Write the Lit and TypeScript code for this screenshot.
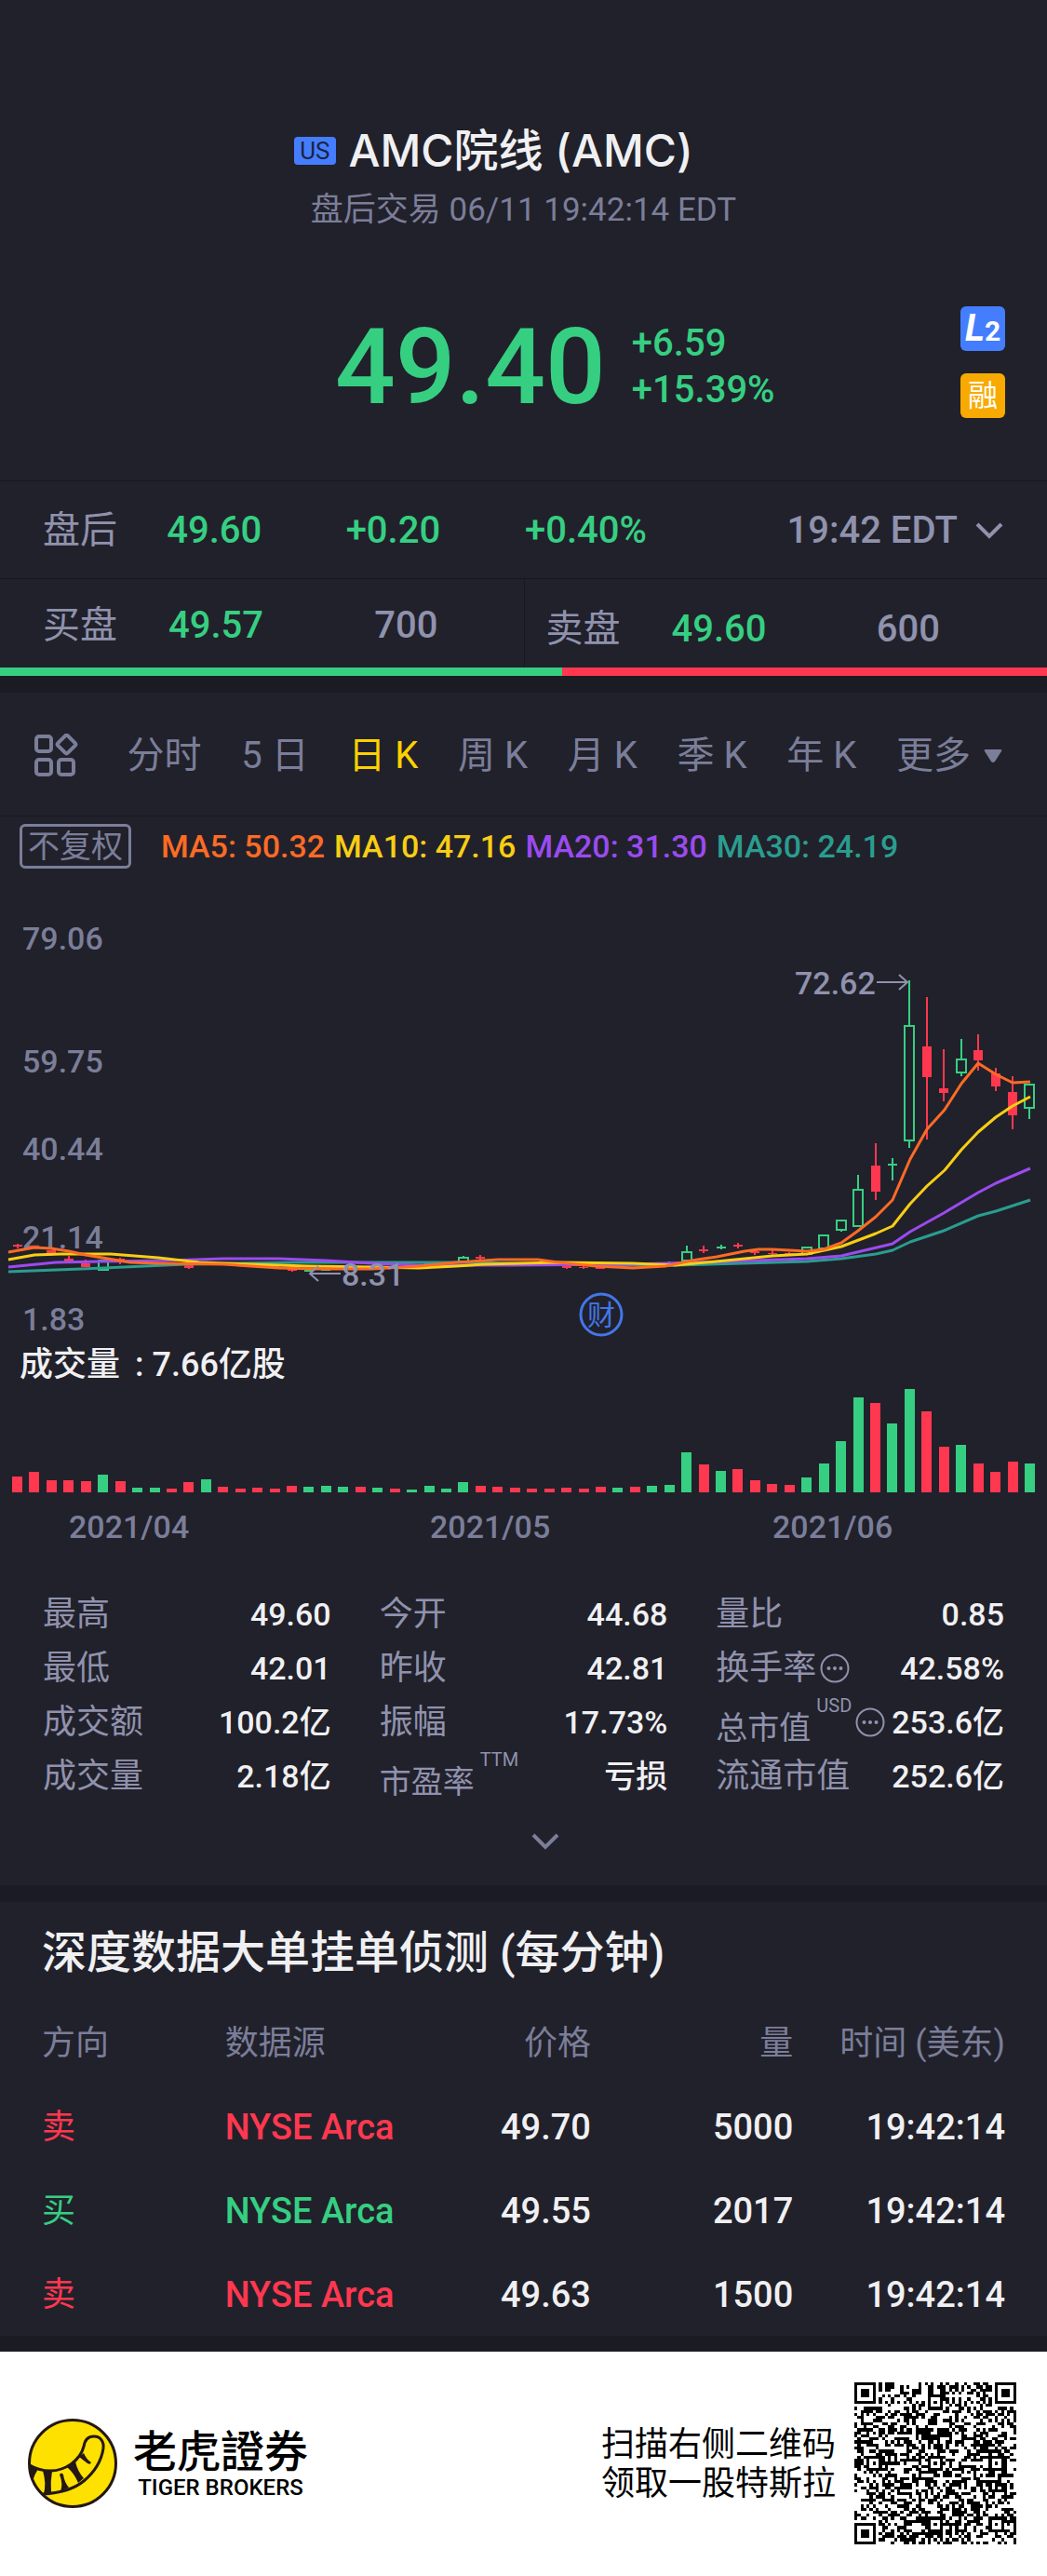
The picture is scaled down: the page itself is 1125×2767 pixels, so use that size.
import { LitElement, html, css, svg } from "lit";
import { customElement, state } from "lit/decorators.js";

type Side = "up" | "down";

/** [slot, side, bodyTop, bodyBottom, high, low] in plot units. */
type Candle = [number, Side, number, number, number, number];

const SLOT = 18.44;
const FIRST = 18.5;
const slotX = (i: number) => FIRST + i * SLOT;

const CANDLES: Candle[] = [
  [0, "down", 387, 389, 386, 391],
  [1, "down", 388, 390, 388, 391],
  [2, "down", 393, 397, 393, 399],
  [3, "down", 402, 405, 399, 406],
  [4, "down", 407, 411, 403, 411],
  [5, "up", 404, 414, 404, 414],
  [6, "down", 402, 404, 401, 408],
  [10, "down", 409, 412, 409, 413],
  [11, "up", 406, 408, 405, 409],
  [14, "down", 409, 410, 408, 411],
  [15, "down", 409, 411, 408, 412],
  [16, "down", 411, 415, 410, 416],
  [17, "up", 413, 416, 413, 416],
  [18, "up", 413, 415, 412, 415],
  [24, "up", 406, 408, 406, 408],
  [25, "up", 405, 408, 405, 408],
  [26, "up", 401, 405, 399, 405],
  [27, "down", 400, 402, 398, 403],
  [28, "down", 403, 404, 402, 404],
  [32, "down", 410, 412, 410, 413],
  [33, "down", 411, 412, 410, 413],
  [34, "down", 411, 413, 410, 413],
  [37, "up", 407, 408, 406, 409],
  [38, "up", 406, 408, 405, 409],
  [39, "up", 395, 404, 388, 404],
  [40, "down", 392, 394, 388, 396],
  [41, "up", 389, 391, 387, 392],
  [42, "down", 387, 389, 385, 391],
  [43, "down", 394, 396, 394, 398],
  [44, "down", 396, 397, 393, 398],
  [45, "down", 396, 398, 395, 399],
  [46, "up", 390, 397, 389, 397],
  [47, "up", 377, 391, 377, 391],
  [48, "up", 361, 371, 360, 373],
  [49, "up", 328, 367, 312, 368],
  [50, "down", 302, 330, 278, 339],
  [51, "up", 300, 302, 294, 318],
  [52, "up", 152, 275, 103, 283],
  [53, "down", 174, 207, 121, 274],
  [54, "down", 219, 224, 177, 233],
  [55, "up", 188, 202, 166, 206],
  [56, "down", 178, 189, 161, 200],
  [57, "down", 203, 217, 197, 222],
  [58, "down", 223, 248, 206, 263],
  [59, "up", 215, 240, 215, 252],
];

const AVERAGES = [
  {
    name: "ma30",
    label: "MA30: 24.19",
    points:
      "9,416 100,412.5 200,408 320,406 500,406 620,408 680,409 725,409 780,407.5 867,405 904,402 941,397 959,393 978,384 1014,372 1051,356 1070,351 1107,339",
  },
  {
    name: "ma20",
    label: "MA20: 31.30",
    points:
      "9,411 60,406 110,405 180,404 240,402 300,402 350,404 400,407 450,409 550,409 680,408 780,405 867,402 904,399 959,386 978,373 1014,353 1051,331 1070,321 1107,305",
  },
  {
    name: "ma10",
    label: "MA10: 47.16",
    points:
      "9,403 37,398 65,397 119,397 170,401 214,406 270,408 330,410 400,411 450,412 490,410 520,408 600,406 680,407 725,409 780,404 830,399 867,397 904,389 941,375 959,367 978,343 996,324 1015,307 1033,285 1051,266 1070,250 1088,238 1107,228",
  },
  {
    name: "ma5",
    label: "MA5: 50.32",
    points:
      "9,395 37,390 55,391 74,394 92,398 110,401 140,406 170,407 240,408 300,412 340,413 400,413 450,410 490,406 535,403 578,403 600,406 640,410 680,412 715,410 743,404 770,400 800,394 815,392 830,392 867,394 885,392 904,385 922,372 941,357 959,339 978,295 996,263 1015,242 1033,214 1051,192 1070,204 1088,213 1107,212",
  },
];

const PRICE_SCALE: [string, number][] = [
  ["79.06", 70],
  ["59.75", 202],
  ["40.44", 296],
  ["21.14", 391],
  ["1.83", 479],
];

/** Bar heights; a leading minus marks a falling day. */
const VOLUMES = [
  -17, -22, -13, -13, -12, 19, -12, 5, 5, -4, -11, 14, -6, -4, -5, -4, -7, 6, 7, 6,
  -6, 5, -4, 3, 7, 4, 11, -7, -6, -5, -4, -4, -5, -4, -6, 5, -6, 7, 8, 43,
  -30, 23, -25, -13, -9, -8, 16, 31, 55, 102, -96, 74, 111, -87, -49, 51, -31, -22, -33, 31,
];

const MONTHS: [string, number][] = [
  ["2021/04", 74],
  ["2021/05", 462],
  ["2021/06", 830],
];

const TABS: [string, string][] = [
  ["分时", ""],
  ["5", "日"],
  ["日", "K"],
  ["周", "K"],
  ["月", "K"],
  ["季", "K"],
  ["年", "K"],
];

interface Stat {
  label: string;
  value: string;
  sup?: string;
  info?: boolean;
}

const STATS: Stat[] = [
  { label: "最高", value: "49.60" },
  { label: "今开", value: "44.68" },
  { label: "量比", value: "0.85" },
  { label: "最低", value: "42.01" },
  { label: "昨收", value: "42.81" },
  { label: "换手率", value: "42.58%", info: true },
  { label: "成交额", value: "100.2亿" },
  { label: "振幅", value: "17.73%" },
  { label: "总市值", value: "253.6亿", sup: "USD", info: true },
  { label: "成交量", value: "2.18亿" },
  { label: "市盈率", value: "亏损", sup: "TTM" },
  { label: "流通市值", value: "252.6亿" },
];

const ORDERS: [Side, string, string, string, string][] = [
  ["down", "NYSE Arca", "49.70", "5000", "19:42:14"],
  ["up", "NYSE Arca", "49.55", "2017", "19:42:14"],
  ["down", "NYSE Arca", "49.63", "1500", "19:42:14"],
];

const QR_SIZE = 53;

/** Dark modules of the code: finders, timing, alignment, then the data area. */
function qrPath(): string {
  const n = QR_SIZE;
  const grid: (boolean | null)[][] = Array.from({ length: n }, () => Array(n).fill(null));
  const square = (cx: number, cy: number, r: number, dark: (d: number) => boolean) => {
    for (let y = -r; y <= r; y++)
      for (let x = -r; x <= r; x++) {
        const row = grid[cy + y];
        if (row && cx + x >= 0 && cx + x < n) row[cx + x] = dark(Math.max(Math.abs(x), Math.abs(y)));
      }
  };
  for (const x of [6, 26, 46])
    for (const y of [6, 26, 46]) {
      if ((x === 6 && y !== 26) || (y === 6 && x === 46)) continue;
      square(x, y, 2, (d) => d !== 1);
    }
  for (const [x, y] of [[3, 3], [n - 4, 3], [3, n - 4]]) square(x, y, 4, (d) => d !== 2 && d !== 4);
  let seed = 20210611;
  let d = "";
  for (let y = 0; y < n; y++)
    for (let x = 0; x < n; x++) {
      seed = (Math.imul(seed, 1664525) + 1013904223) >>> 0;
      let dark = grid[y][x];
      if (dark === null) dark = x === 6 || y === 6 ? (x + y) % 2 === 0 : seed / 4294967296 < 0.5;
      if (dark) d += `M${x} ${y}h1v1h-1z`;
    }
  return d;
}

const chevron = html`<svg class="chevron" viewBox="0 0 32 20" aria-hidden="true">
  <path d="M3 3 16 16 29 3" fill="none" stroke="currentColor" stroke-width="4" />
</svg>`;

@customElement("app-root")
export class AppRoot extends LitElement {
  static styles = css`
    :host {
      display: block;
      background: #21212b;
      color: #f0f0f2;
      font-family: Roboto, "Noto Sans CJK SC", sans-serif;
      font-size: 34px;
      line-height: 48px;
      --up: #36cf82;
      --down: #ff3850;
      --muted: #7b7e99;
      --soft: #9092ad;
      --rule: #17171f;
      --band: #1b1b24;
      --blue: #447eff;
    }
    * { box-sizing: border-box; }
    h1, h2, p, dl, dd { margin: 0; }
    button {
      font: inherit;
      color: inherit;
      background: none;
      border: 0;
      padding: 0;
      white-space: nowrap;
      cursor: pointer;
    }
    svg { display: block; }
    .up { color: var(--up); }
    .down { color: var(--down); }
    .num { font-weight: 500; }

    .head {
      padding: 134px 0 42px;
      border-bottom: 1px solid var(--rule);
    }
    .title {
      display: flex;
      justify-content: center;
      align-items: center;
      gap: 14px;
      padding-right: 64px;
    }
    .market {
      background: var(--blue);
      color: #1c2340;
      border-radius: 4px;
      padding: 0 6px;
      font-size: 26px;
      line-height: 30px;
    }
    .name {
      font: 500 48px/56px Inter, "Noto Sans CJK SC", sans-serif;
    }
    .session {
      margin-top: 12px;
      text-align: center;
      font-size: 35px;
      color: var(--muted);
    }
    .quote {
      display: flex;
      align-items: center;
      height: 160px;
      margin-top: 64px;
      padding: 0 45px 0 32%;
    }
    .price {
      font-size: 114px;
      line-height: 160px;
      font-weight: 500;
      color: var(--up);
    }
    .change {
      margin-left: 28px;
      font-size: 40px;
      line-height: 50px;
      font-weight: 500;
      color: var(--up);
    }
    .badges {
      display: grid;
      gap: 24px;
      margin-left: auto;
      align-self: flex-start;
      padding-top: 15px;
    }
    .badge {
      width: 48px;
      height: 48px;
      border-radius: 6px;
      color: #fff;
      font-size: 32px;
      line-height: 48px;
      text-align: center;
      background: #f9aa00;
    }
    .level {
      background: var(--blue);
      font-weight: 700;
      font-size: 30px;
    }
    .level em { font-size: 40px; }

    .after {
      display: grid;
      grid-template-columns: 133fr 192fr 192fr 248fr 266fr;
      align-items: center;
      height: 105px;
      padding: 2px 46px 0;
      border-bottom: 1px solid var(--rule);
      font-size: 40px;
      color: var(--soft);
    }
    .clock {
      display: flex;
      align-items: center;
      gap: 18px;
      justify-self: end;
    }
    .chevron { width: 32px; height: 20px; }
    .book {
      display: grid;
      grid-template-columns: 1fr 1fr;
      font-size: 40px;
      color: var(--soft);
    }
    .bid, .ask {
      display: flex;
      align-items: center;
      gap: 55px;
      height: 95px;
      padding: 4px 92px 0 46px;
    }
    .ask {
      padding: 12px 115px 0 23px;
      border-left: 1px solid var(--rule);
    }
    .qty { margin-left: auto; }
    .ratio {
      display: flex;
      height: 9px;
      background: var(--down);
    }
    .ratio-up { background: var(--up); }
    .band { height: 18px; background: var(--band); }

    .tabs {
      display: flex;
      align-items: center;
      justify-content: space-between;
      height: 133px;
      padding: 4px 48px 0 36px;
      border-bottom: 1px solid var(--rule);
      font-size: 40px;
      color: var(--muted);
    }
    .tab { display: flex; gap: 10px; }
    .tab.on { color: #fdd100; }
    .layout { margin-right: 10px; }
    .grid-icon { width: 48px; height: 48px; }
    .more { display: flex; align-items: center; gap: 14px; }
    .caret { width: 20px; height: 16px; }

    .legend {
      display: flex;
      align-items: center;
      gap: 10px;
      padding: 8px 21px 0;
      line-height: 42px;
      font-weight: 500;
    }
    .adjust {
      border: 3px solid var(--muted);
      border-radius: 6px;
      padding: 0 6px;
      margin-right: 22px;
      color: var(--muted);
      line-height: 42px;
      font-weight: 400;
    }
    .ma5 { color: #fd6b25; }
    .ma10 { color: #f8ce14; }
    .ma20 { color: #9b4bf0; }
    .ma30 { color: #2a9d8f; }
    .plot { width: 100%; height: auto; font-size: 34px; font-weight: 500; }
    .price-plot { margin-top: 17px; }
    .axis { fill: var(--muted); }
    .mark { fill: var(--soft); }
    .arrow { fill: none; stroke: var(--soft); stroke-width: 2; }
    .line { fill: none; stroke: currentColor; stroke-width: 3; stroke-linejoin: round; }
    .hollow { fill: #21212b; stroke: var(--up); stroke-width: 2; }
    .wick { stroke: currentColor; stroke-width: 2; }
    .report { fill: none; stroke: #4277e8; stroke-width: 3; }
    .report-text { fill: #4277e8; font-size: 30px; font-weight: 400; text-anchor: middle; }
    .bar { fill: currentColor; }
    .volume {
      display: flex;
      gap: 16px;
      padding: 4px 21px 0;
      font-size: 36px;
      line-height: 45px;
      font-weight: 500;
    }

    .stats {
      display: grid;
      grid-template-columns: repeat(3, 1fr);
      column-gap: 52px;
      padding: 41px 46px 0;
    }
    .stat {
      display: flex;
      align-items: center;
      height: 58px;
    }
    .stat dt {
      display: flex;
      align-items: center;
      font-size: 36px;
      color: var(--soft);
      white-space: nowrap;
    }
    .stat dd { margin-left: auto; white-space: nowrap; font-weight: 500; }
    .has-sup .term { font-size: 34px; padding-top: 12px; }
    .sup {
      align-self: flex-start;
      font-size: 20px;
      line-height: 24px;
      padding-left: 6px;
    }
    .info { margin-left: 4px; }
    .info-icon { width: 32px; height: 32px; }
    .expand {
      display: block;
      margin: 21px auto 27px;
      padding: 10px 0 10px 46px;
      color: var(--muted);
    }

    .depth { padding: 25px 45px 0; }
    .depth h2 {
      font-size: 48px;
      line-height: 60px;
      font-weight: 500;
    }
    table {
      width: 100%;
      margin-top: 22px;
      border-collapse: collapse;
      table-layout: fixed;
      font-size: 38px;
    }
    th, td {
      height: 90px;
      padding: 0;
      text-align: right;
      font-weight: 400;
      white-space: nowrap;
    }
    td { font-weight: 500; }
    th { color: var(--muted); font-size: 36px; }
    .left { text-align: left; }
    .side { font-size: 36px; font-weight: 400; }
    .c1 { width: 19%; }
    .c2 { width: 23%; }
    .c3 { width: 15%; }
    .c4 { width: 21%; }
    .c5 { width: 22%; }
    .last { height: 17px; margin-top: -1px; }

    .foot {
      display: flex;
      align-items: center;
      min-height: 240px;
      padding: 0 33px 0 30px;
      background: #fff;
      color: #000;
    }
    .logo { width: 96px; height: 96px; }
    .brand { margin-left: 17px; text-align: center; }
    .brand-cn {
      font: 500 47px/48px "Noto Sans CJK TC", sans-serif;
    }
    .brand-en {
      margin-top: 4px;
      font-size: 24px;
      line-height: 28px;
      font-weight: 500;
    }
    .invite {
      margin-left: auto;
      padding-top: 2px;
      font-size: 36px;
      line-height: 42px;
    }
    .qr { width: 174px; height: 174px; margin-left: 20px; }
  `;

  @state() private tab = 2;

  private candle([i, side, top, bottom, high, low]: Candle) {
    const x = Math.round(slotX(i));
    return svg`<g class=${side}>
      <line class="wick" x1=${x} x2=${x} y1=${high} y2=${low}></line>
      ${side === "up" && bottom - top > 3
        ? svg`<rect class="hollow" x=${x - 5} y=${top} width="10" height=${bottom - top}></rect>`
        : svg`<rect class="bar" x=${x - 5} y=${top} width="10" height=${bottom - top}></rect>`}
    </g>`;
  }

  private renderHead() {
    return html`
      <header class="head">
        <div class="title">
          <span class="market">US</span>
          <h1 class="name">AMC院线 (AMC)</h1>
        </div>
        <p class="session">盘后交易 06/11 19:42:14 EDT</p>
        <div class="quote">
          <div class="price">49.40</div>
          <div class="change">
            <div>+6.59</div>
            <div>+15.39%</div>
          </div>
          <div class="badges">
            <span class="badge level"><em>L</em>2</span>
            <span class="badge">融</span>
          </div>
        </div>
      </header>
      <div class="after">
        <span>盘后</span>
        <span class="up num">49.60</span>
        <span class="up num">+0.20</span>
        <span class="up num">+0.40%</span>
        <button class="clock num">19:42 EDT ${chevron}</button>
      </div>
      <div class="book">
        <div class="bid">
          <span>买盘</span><span class="up num">49.57</span><span class="qty num">700</span>
        </div>
        <div class="ask">
          <span>卖盘</span><span class="up num">49.60</span><span class="qty num">600</span>
        </div>
      </div>
      <div class="ratio"><div class="ratio-up" style="width:${(700 / 1304) * 100}%"></div></div>
      <div class="band"></div>
    `;
  }

  private renderChart() {
    return html`
      <nav class="tabs">
        <button class="layout" aria-label="图表布局">
          <svg class="grid-icon" viewBox="0 0 48 48" fill="none" stroke="currentColor" stroke-width="4">
            <rect x="3" y="3" width="16" height="16" rx="3" />
            <rect x="28" y="4" width="15" height="15" rx="2" transform="rotate(45 35.5 11.5)" />
            <rect x="3" y="28" width="16" height="16" rx="3" />
            <rect x="27" y="28" width="16" height="16" rx="3" />
          </svg>
        </button>
        ${TABS.map(
          ([name, unit], i) => html`<button
            class="tab ${i === this.tab ? "on" : ""}"
            @click=${() => (this.tab = i)}
          ><span>${name}</span>${unit ? html`<span>${unit}</span>` : ""}</button>`,
        )}
        <button class="more">
          更多
          <svg class="caret" viewBox="0 0 20 16" aria-hidden="true">
            <path d="M2 1h16q2 0 1 2l-7 11q-2 2-4 0L1 3q-1-2 1-2z" fill="currentColor" />
          </svg>
        </button>
      </nav>
      <div class="legend">
        <button class="adjust">不复权</button>
        ${[...AVERAGES].reverse().map((a) => html`<span class=${a.name}>${a.label}</span>`)}
      </div>
      <svg class="plot price-plot" viewBox="0 0 1125 490" role="img" aria-label="日K线">
        ${PRICE_SCALE.map(([t, y]) => svg`<text class="axis" x="24" y=${y}>${t}</text>`)}
        ${CANDLES.map((c) => this.candle(c))}
        ${AVERAGES.map((a) => svg`<polyline class="line ${a.name}" points=${a.points}></polyline>`)}
        <text class="mark" x="854" y="118">72.62</text>
        <path class="arrow" d="M942 105h33M966 97l9 8-9 8" />
        <text class="mark" x="367" y="431">8.31</text>
        <path class="arrow" d="M366 418h-33M342 410l-9 8 9 8" />
        <circle class="report" cx="646" cy="462" r="22" />
        <text class="report-text" x="646" y="473">财</text>
      </svg>
      <p class="volume"><span>成交量</span><span>: 7.66亿股</span></p>
      <svg class="plot" viewBox="0 0 1125 175" role="img" aria-label="成交量">
        ${VOLUMES.map((v, i) => {
          const h = Math.abs(v);
          return svg`<rect class="bar ${v < 0 ? "down" : "up"}" x=${Math.round(slotX(i) - 5.5)} y=${114 - h} width="11" height=${h}></rect>`;
        })}
        ${MONTHS.map(([t, x]) => svg`<text class="axis" x=${x} y="163">${t}</text>`)}
      </svg>
    `;
  }

  private renderStats() {
    return html`
      <dl class="stats">
        ${STATS.map(
          (s) => html`<div class="stat">
            <dt class=${s.sup ? "has-sup" : ""}>
              <span class="term">${s.label}</span>
              ${s.sup ? html`<span class="sup">${s.sup}</span>` : ""}
              ${s.info
                ? html`<button class="info" aria-label="${s.label}说明">
                    <svg class="info-icon" viewBox="0 0 32 32">
                      <circle cx="16" cy="16" r="14.5" fill="none" stroke="currentColor" stroke-width="2" />
                      <g fill="currentColor">
                        <circle cx="9.5" cy="16" r="2" />
                        <circle cx="16" cy="16" r="2" />
                        <circle cx="22.5" cy="16" r="2" />
                      </g>
                    </svg>
                  </button>`
                : ""}
            </dt>
            <dd>${s.value}</dd>
          </div>`,
        )}
      </dl>
      <button class="expand" aria-label="展开">${chevron}</button>
      <div class="band"></div>
    `;
  }

  private renderDepth() {
    return html`
      <section class="depth">
        <h2>深度数据大单挂单侦测 (每分钟)</h2>
        <table>
          <thead>
            <tr>
              <th class="left c1">方向</th>
              <th class="left c2">数据源</th>
              <th class="c3">价格</th>
              <th class="c4">量</th>
              <th class="c5">时间 (美东)</th>
            </tr>
          </thead>
          <tbody>
            ${ORDERS.map(
              ([side, source, price, qty, time]) => html`<tr>
                <td class="left side ${side}">${side === "up" ? "买" : "卖"}</td>
                <td class="left ${side}">${source}</td>
                <td>${price}</td>
                <td>${qty}</td>
                <td>${time}</td>
              </tr>`,
            )}
          </tbody>
        </table>
      </section>
      <div class="band last"></div>
    `;
  }

  private renderFoot() {
    return html`
      <footer class="foot">
        <svg class="logo" viewBox="0 0 96 96" role="img" aria-label="老虎證券">
          <circle cx="48" cy="48" r="46.5" fill="#ffe100" />
          <g fill="#231815">
            <path d="M2 49q4 3 9 5-4 6-6 13-4-8-3-18z" />
            <path d="M16 56h10q-2 12-1 23l-8 2q3-12-1-25z" />
            <path d="M34 60q2-3 4 0 1 8 6 14l-9 4q3-8-1-18z" />
            <path d="M42 52l9-6q2 10 9 18l-6 5q-4-10-12-17z" />
            <path d="M55 41l5-4q3 7 8 10-1 3-4 1-4-3-9-7z" />
          </g>
          <path
            d="M2 50Q12 56 24 56C40 56 56 45 60 30C61 23 65 19 71 19C78 19 82 25 81 32C79 45 72 57 60 67C49 76 35 80 16 81"
            fill="none" stroke="#231815" stroke-width="3" />
          <circle cx="48" cy="48" r="46.5" fill="none" stroke="#231815" stroke-width="3" />
        </svg>
        <div class="brand">
          <div class="brand-cn">老虎證券</div>
          <div class="brand-en">TIGER BROKERS</div>
        </div>
        <p class="invite">扫描右侧二维码<br />领取一股特斯拉</p>
        <svg class="qr" viewBox="0 0 53 53" shape-rendering="crispEdges" role="img" aria-label="二维码">
          <path d=${qrPath()} fill="#000" />
        </svg>
      </footer>
    `;
  }

  render() {
    return html`<main>
      ${this.renderHead()} ${this.renderChart()} ${this.renderStats()} ${this.renderDepth()}
      ${this.renderFoot()}
    </main>`;
  }
}
